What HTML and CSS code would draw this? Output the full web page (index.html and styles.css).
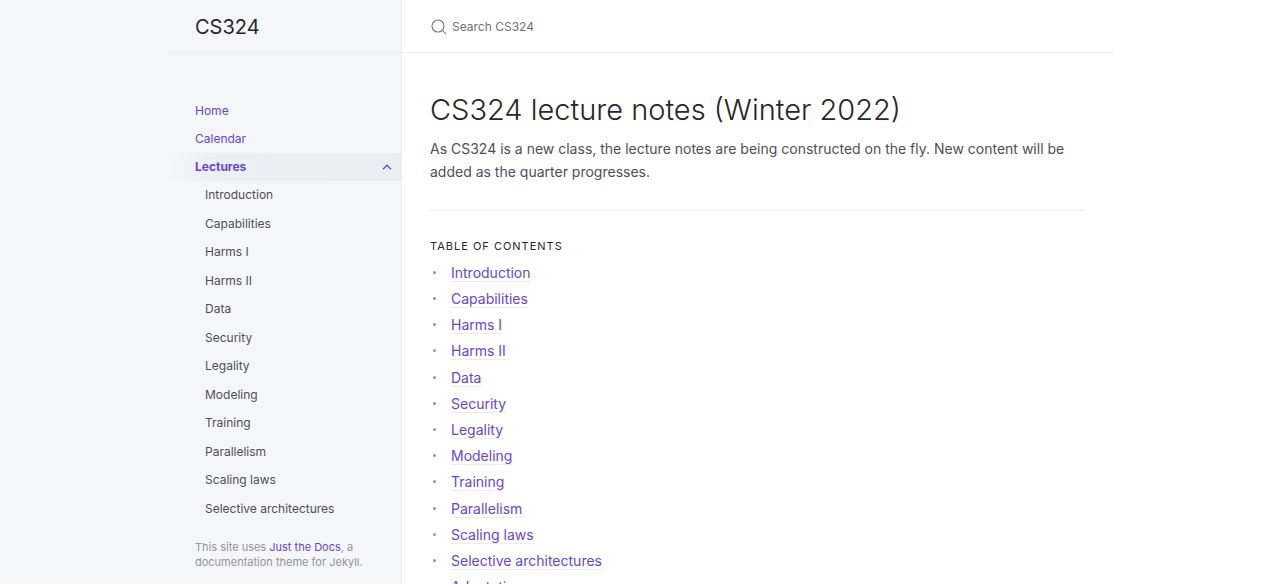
FILE: index.html
```html
<!DOCTYPE html>
<html lang="en">
<head>
  <meta charset="UTF-8">
  <meta name="viewport" content="width=device-width, initial-scale=1.0">
  <title>CS324 lecture notes (Winter 2022)</title>
  <link rel="stylesheet" href="styles.css">
</head>
<body>
  <div class="side-bar">
    <header class="site-header">
      <a href="#" class="site-title">CS324</a>
    </header>

    <nav class="site-nav" aria-label="Main">
      <ul class="nav-list">
        <li><a href="#" class="nav-link">Home</a></li>
        <li><a href="#calendar" class="nav-link">Calendar</a></li>
        <li>
          <a href="#lectures" class="nav-link active">
            Lectures
            <svg class="nav-arrow" viewBox="0 0 10 6" aria-hidden="true"><path d="M1 5.2 5 1.2l4 4"/></svg>
          </a>
          <ul class="nav-children">
            <li><a href="#introduction">Introduction</a></li>
            <li><a href="#capabilities">Capabilities</a></li>
            <li><a href="#harms-1">Harms I</a></li>
            <li><a href="#harms-2">Harms II</a></li>
            <li><a href="#data">Data</a></li>
            <li><a href="#security">Security</a></li>
            <li><a href="#legality">Legality</a></li>
            <li><a href="#modeling">Modeling</a></li>
            <li><a href="#training">Training</a></li>
            <li><a href="#parallelism">Parallelism</a></li>
            <li><a href="#scaling-laws">Scaling laws</a></li>
            <li><a href="#selective-architectures">Selective architectures</a></li>
          </ul>
        </li>
      </ul>
    </nav>

    <footer class="site-footer">
      This site uses <a href="#just-the-docs">Just the Docs</a>, a documentation theme for Jekyll.
    </footer>
  </div>

  <div class="main">
    <div class="main-header">
      <label class="search">
        <svg class="search-icon" viewBox="0 0 16 16" aria-hidden="true"><circle cx="7" cy="7" r="6"/><path d="m11.4 11.4 3.5 3.5"/></svg>
        <input type="text" class="search-input" placeholder="Search CS324" aria-label="Search CS324">
      </label>
    </div>

    <main class="main-content">
      <h1>CS324 lecture notes (Winter 2022)</h1>
      <p>As CS324 is a new class, the lecture notes are being constructed on the fly. New content will be added as the quarter progresses.</p>
      <hr>
      <h2>Table of contents</h2>
      <ul class="toc">
        <li><a href="#introduction">Introduction</a></li>
        <li><a href="#capabilities">Capabilities</a></li>
        <li><a href="#harms-1">Harms I</a></li>
        <li><a href="#harms-2">Harms II</a></li>
        <li><a href="#data">Data</a></li>
        <li><a href="#security">Security</a></li>
        <li><a href="#legality">Legality</a></li>
        <li><a href="#modeling">Modeling</a></li>
        <li><a href="#training">Training</a></li>
        <li><a href="#parallelism">Parallelism</a></li>
        <li><a href="#scaling-laws">Scaling laws</a></li>
        <li><a href="#selective-architectures">Selective architectures</a></li>
        <li><a href="#adaptation">Adaptation</a></li>
      </ul>
    </main>
  </div>
</body>
</html>
```
FILE: styles.css
```css
* {
  box-sizing: border-box;
}

body {
  margin: 0;
  display: flex;
  align-items: flex-start;
  font-family: Inter, "Liberation Sans", sans-serif;
  font-size: 14px;
  line-height: 23px;
  color: #504e55;
  background-color: #fff;
}

a {
  color: #6547cf;
  text-decoration: none;
}

ul {
  list-style: none;
  margin: 0;
  padding: 0;
}

/* Sidebar */
.side-bar {
  position: sticky;
  top: 0;
  flex: none;
  display: flex;
  flex-direction: column;
  width: calc((100% - 946px) / 2 + 235px);
  min-width: 235px;
  height: 100vh;
  padding-left: calc((100% - 946px) / 2);
  background-color: #f5f6fa;
  border-right: 1px solid #eeebee;
}

.site-header {
  flex: none;
  display: flex;
  align-items: center;
  height: 53px;
  padding: 2px 28px 0;
  border-bottom: 1px solid #eeebee;
}

.site-title {
  font-size: 20px;
  line-height: 26px;
  color: #27262b;
}

.site-nav {
  padding-top: 44px;
  font-size: 12px;
  line-height: 28px;
}

.nav-link {
  display: flex;
  align-items: center;
  justify-content: space-between;
  padding: 0 9px 0 28px;
}

.nav-link.active {
  font-weight: 700;
  background-image: linear-gradient(-90deg, #ebedf5 0%, rgba(235, 237, 245, 0.8) 80%, rgba(235, 237, 245, 0) 100%);
}

.nav-arrow {
  width: 10px;
  height: 6px;
  fill: none;
  stroke: #6547cf;
  stroke-width: 1.3;
}

.nav-children {
  display: grid;
  grid-auto-rows: 1fr;
  align-items: center;
  min-height: 342px;
}

.nav-children a {
  display: block;
  padding: 0 28px 0 38px;
  color: #504e55;
}

.site-footer {
  padding: 17px 28px;
  font-size: 11px;
  line-height: 15px;
  color: #959396;
}

/* Main column */
.main {
  flex: 1;
  min-width: 0;
  max-width: 711px;
}

.main-header {
  height: 53px;
  padding: 2px 29px 0;
  border-bottom: 1px solid #eeebee;
}

.search {
  display: flex;
  align-items: center;
  gap: 5px;
  height: 50px;
}

.search-icon {
  flex: none;
  width: 16px;
  height: 16px;
  fill: none;
  stroke: #77747b;
  stroke-width: 1.1;
}

.search-input {
  flex: 1;
  min-width: 0;
  padding: 0;
  border: 0;
  outline: 0;
  background: none;
  font-family: inherit;
  font-size: 12px;
  line-height: 20px;
  color: #504e55;
}

.search-input::placeholder {
  color: #737077;
}

.main-content {
  padding: 37px 28px 28px;
}

h1 {
  margin: 0 0 7px;
  font-size: 29px;
  font-weight: 300;
  line-height: 40px;
  color: #27262b;
}

p {
  margin: 0;
}

hr {
  height: 1px;
  margin: 27px 0 28px;
  border: 0;
  background-color: #eeebee;
}

h2 {
  margin: 0 0 6px;
  font-size: 11px;
  font-weight: 400;
  line-height: 14px;
  letter-spacing: 1px;
  text-transform: uppercase;
  color: #27262b;
}

.toc {
  display: grid;
  grid-auto-rows: 1fr;
  align-items: center;
  min-height: 341px;
}

.toc li {
  display: flex;
  align-items: center;
}

.toc li::before {
  content: "";
  width: 3px;
  height: 3px;
  margin: 0 15px 0 3px;
  border-radius: 50%;
  background-color: #959396;
}

.toc a {
  text-decoration: underline;
  text-decoration-color: #eeebee;
  text-decoration-thickness: 1px;
  text-underline-offset: 3px;
}
```
